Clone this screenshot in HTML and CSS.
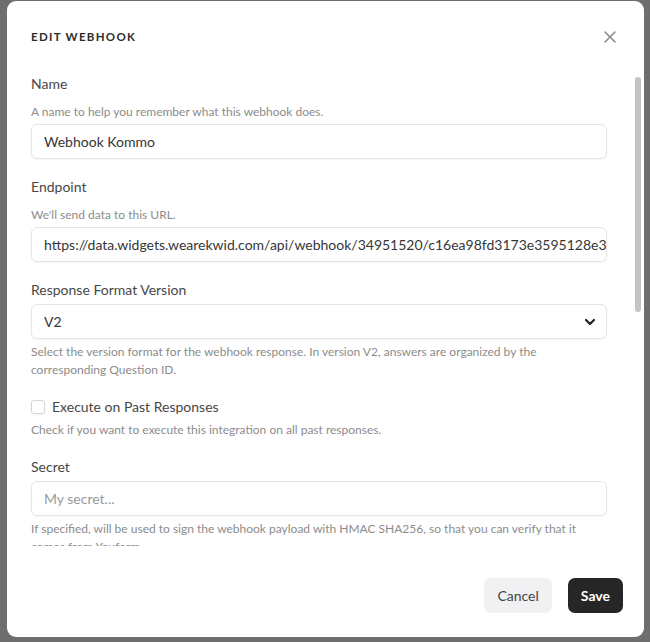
FILE: index.html
```html
<!DOCTYPE html>
<html lang="en">
  <head>
    <meta name="viewport" content="width=device-width, initial-scale=1.0" />
    <title>Edit webhook</title>
    <link rel="stylesheet" href="styles.css">
  </head>

  <body>
    <div class="modal">
      <div class="modal-header">
        <h2>Edit webhook</h2>
        <button class="close" aria-label="Close">
          <svg width="12" height="12" viewBox="0 0 12 12">
            <path d="M1 1L11 11M11 1L1 11" stroke="#8a8a8a" stroke-width="1.6" stroke-linecap="round" />
          </svg>
        </button>
      </div>

      <div class="modal-body">
        <div class="field">
          <label>Name</label>
          <p class="hint above">A name to help you remember what this webhook does.</p>
          <div class="input">Webhook Kommo</div>
        </div>

        <div class="field">
          <label>Endpoint</label>
          <p class="hint above">We'll send data to this URL.</p>
          <div class="input">https://data.widgets.wearekwid.com/api/webhook/34951520/c16ea98fd3173e3595128e3f0a7b</div>
        </div>

        <div class="field">
          <label>Response Format Version</label>
          <div class="input select">
            <span>V2</span>
            <svg width="12" height="8" viewBox="0 0 12 8">
              <path d="M2 2L6 6L10 2" fill="none" stroke="#222" stroke-width="2.2" stroke-linecap="round" stroke-linejoin="round" />
            </svg>
          </div>
          <p class="hint">Select the version format for the webhook response. In version V2, answers are organized by the corresponding Question ID.</p>
        </div>

        <div class="field">
          <div class="check-row">
            <span class="checkbox"></span>
            <span>Execute on Past Responses</span>
          </div>
          <p class="hint">Check if you want to execute this integration on all past responses.</p>
        </div>

        <div class="field">
          <label>Secret</label>
          <div class="input placeholder">My secret...</div>
          <p class="hint">If specified, will be used to sign the webhook payload with HMAC SHA256, so that you can verify that it comes from Youform.</p>
        </div>

        <!-- scroll thumb -->
        <div class="thumb"></div>
      </div>

      <div class="modal-footer">
        <button class="btn cancel">Cancel</button>
        <button class="btn save">Save</button>
      </div>
    </div>
  </body>
</html>
```

FILE: styles.css
```css
* {
  padding: 0;
  margin: 0;
  box-sizing: border-box;
  font-family: "Lato", sans-serif;
}

body {
  background-color: #6e6e6e;
  height: 642px;
  overflow: hidden;
}

.modal {
  width: 637px;
  height: 636px;
  margin: 1px 0 0 7px;
  background-color: #ffffff;
  border-radius: 9px;
  display: flex;
  flex-direction: column;
}

.modal-header {
  display: flex;
  justify-content: space-between;
  align-items: flex-start;
  padding: 26px 27px 0 24px;
  height: 65px;
}

.modal-header h2 {
  font-size: 11.5px;
  font-weight: 700;
  letter-spacing: 1.3px;
  text-transform: uppercase;
  color: #2d2d2d;
  line-height: 20px;
}

.close {
  border: none;
  background: transparent;
  width: 14px;
  height: 20px;
  display: flex;
  align-items: center;
  justify-content: center;
}

.modal-body {
  height: 480px;
  overflow: hidden;
  padding: 8px 37px 0 24px;
  position: relative;
}

.field {
  display: flex;
  flex-direction: column;
}

.field + .field {
  margin-top: 18px;
}

.field label {
  font-size: 14px;
  line-height: 20px;
  color: #474747;
  margin-bottom: 4px;
}

.hint {
  font-size: 12px;
  line-height: 18px;
  color: #8c8c8c;
  margin-top: 4px;
}

.hint.above {
  margin: 5px 0 3px;
}

.input {
  height: 35px;
  border: 1px solid #e5e5e5;
  border-radius: 6px;
  box-shadow: 0 1px 2px rgba(0, 0, 0, 0.04);
  padding: 0 12px;
  font-size: 14px;
  line-height: 33px;
  color: #363636;
  white-space: nowrap;
  overflow: hidden;
}

.input.placeholder {
  color: #9a9a9a;
}

.select {
  display: flex;
  justify-content: space-between;
  align-items: center;
  padding-right: 10px;
}

.check-row {
  display: flex;
  align-items: center;
  gap: 7px;
  font-size: 14px;
  line-height: 20px;
  color: #474747;
}

.checkbox {
  width: 14px;
  height: 14px;
  border: 1px solid #d6d6d6;
  border-radius: 3px;
  box-shadow: 0 1px 2px rgba(0, 0, 0, 0.05);
}

.thumb {
  position: absolute;
  top: 11px;
  right: 3px;
  width: 6px;
  height: 235px;
  border-radius: 3px;
  background-color: #c4c4c4;
}

.modal-footer {
  display: flex;
  justify-content: flex-end;
  gap: 16px;
  padding: 32px 21px 0 0;
}

.btn {
  height: 35px;
  border: none;
  border-radius: 7px;
  font-size: 14px;
  padding: 0 13px;
  cursor: pointer;
}

.cancel {
  background-color: #f1f1f4;
  color: #444444;
}

.save {
  background-color: #262626;
  color: #ffffff;
  font-weight: 700;
}
```
